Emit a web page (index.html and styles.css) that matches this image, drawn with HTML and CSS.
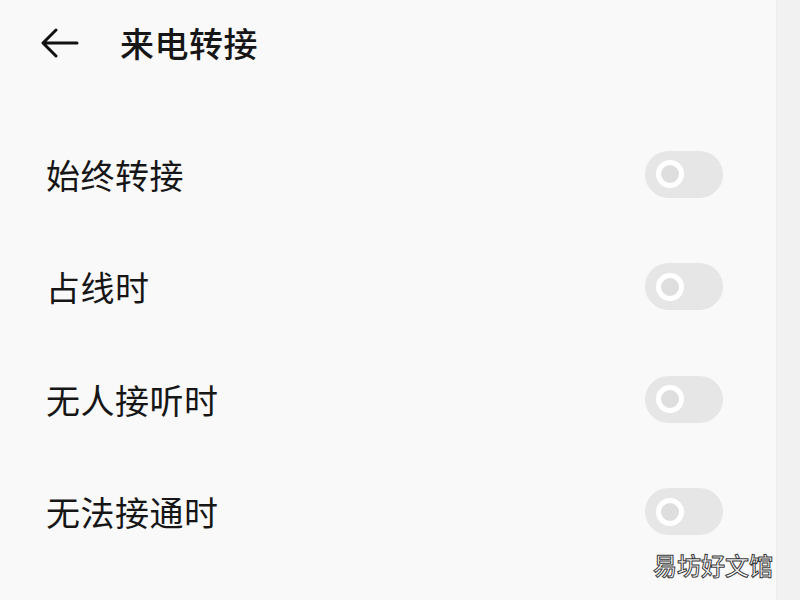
FILE: index.html
```html
<!DOCTYPE html>
<html lang="zh-CN">
<head>
    <meta charset="UTF-8">
    <meta name="viewport" content="width=device-width, initial-scale=1.0">
    <title>来电转接</title>
    <link rel="stylesheet" href="styles.css">
</head>
<body>

    <div class="screen">
        <div class="page">
            <div class="header">
                <svg class="back" width="38" height="30" viewBox="0 0 38 30">
                    <path d="M36 15H3M15 2L2 15l13 13" fill="none" stroke="#111" stroke-width="3" stroke-linecap="round" stroke-linejoin="round"/>
                </svg>
                <h1>来电转接</h1>
            </div>

            <ul class="list">
                <li class="row">
                    <span>始终转接</span>
                    <span class="switch"><span class="knob"></span></span>
                </li>
                <li class="row">
                    <span>占线时</span>
                    <span class="switch"><span class="knob"></span></span>
                </li>
                <li class="row">
                    <span>无人接听时</span>
                    <span class="switch"><span class="knob"></span></span>
                </li>
                <li class="row">
                    <span>无法接通时</span>
                    <span class="switch"><span class="knob"></span></span>
                </li>
            </ul>
        </div>
        <div class="edge"></div>

        <div class="mark">易坊好文馆</div>
    </div>

</body>
</html>
```

FILE: styles.css
```css
body {
    margin: 0;
    font-family: "Noto Sans CJK SC", "Noto Sans", sans-serif;
    background-color: #f9f9f9;
    color: #161616;
}
.screen {
    position: relative;
    display: flex;
    width: 800px;
    height: 600px;
    overflow: hidden;
}
.page {
    flex: 1;
    background-color: #f9f9f9;
}
.edge {
    width: 23px;
    background-color: #f1f1f1;
    border-left: 1px solid #eeeeee;
}
.header {
    display: flex;
    align-items: center;
    height: 84px;
    padding-left: 41px;
}
.back {
    display: block;
    margin-top: 1px;
}
h1 {
    margin: 0 0 0 41px;
    font-size: 34px;
    font-weight: 500;
    letter-spacing: 0.5px;
}
.list {
    list-style: none;
    margin: 0;
    padding: 34px 0 0 0;
}
.row {
    display: flex;
    align-items: center;
    justify-content: space-between;
    height: 112.5px;
    padding: 0 53px 0 46px;
    font-size: 34px;
    letter-spacing: 0.5px;
}
.switch {
    display: flex;
    align-items: center;
    width: 78px;
    height: 47px;
    border-radius: 24px;
    background-color: #e6e6e6;
}
.knob {
    width: 18px;
    height: 18px;
    margin-left: 11px;
    border: 5px solid #ffffff;
    border-radius: 50%;
    background-color: #dedede;
}
.mark {
    position: absolute;
    right: 27px;
    bottom: 18px;
    font-size: 24px;
    font-weight: 500;
    color: #ffffff;
    -webkit-text-stroke: 1px #3a3a3a;
    letter-spacing: 0;
}
```
